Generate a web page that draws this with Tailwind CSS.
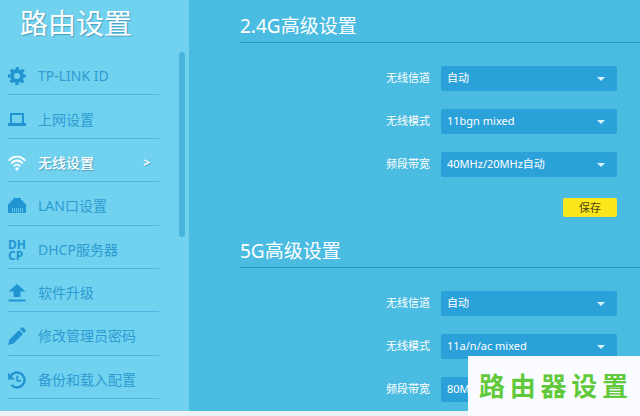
<!DOCTYPE html>
<html lang="zh-CN">
  <head>
    <meta charset="UTF-8" />
    <meta name="viewport" content="width=device-width, initial-scale=1.0" />
    <title>路由设置</title>
    <script src="https://cdn.jsdelivr.net/npm/@tailwindcss/browser@4"></script>
  </head>
  <body
    class="h-screen flex flex-col overflow-hidden bg-[#ebf1f5] font-['Noto_Sans','Noto_Sans_CJK_SC',sans-serif]"
  >
    <div class="flex-1 min-h-0 flex bg-[#4bbce1] mb-[5px]">
      <!-- Sidebar -->
      <aside class="w-[189px] shrink-0 flex flex-col bg-[#71d2f0]">
        <h1
          class="h-[52px] pl-5 pt-[3px] text-[28px] leading-10 text-white text-shadow-[1px_1px_1px_#4a9dbb]"
        >
          路由设置
        </h1>
        <div class="flex-1 min-h-0 flex justify-between pl-2 pr-1">
          <nav class="w-[151px] pb-3 text-sm text-[#2e9bd2]">
            <ul class="h-full grid auto-rows-fr">
              <li class="border-b border-[#4db6e0]">
                <a href="#cloud" class="h-full flex items-center gap-3 pt-1.5">
                  <svg class="size-[18px]" viewBox="0 0 18 18" fill="none" stroke="#2195d2">
                    <circle cx="9" cy="9" r="5" stroke-width="4" />
                    <circle cx="9" cy="9" r="7.8" stroke-width="2.6" stroke-dasharray="3.2 2.926" stroke-dashoffset="1.6" />
                  </svg>
                  TP-LINK ID
                </a>
              </li>
              <li class="border-b border-[#4db6e0]">
                <a href="#wan" class="h-full flex items-center gap-3 pt-1.5">
                  <svg class="size-[18px]" viewBox="0 0 18 18" fill="#2195d2">
                    <path fill-rule="evenodd" d="M2 2h14v10h2v3H0v-3h2zM4 4v8h10V4z" />
                  </svg>
                  上网设置
                </a>
              </li>
              <li class="border-b border-[#4db6e0]">
                <a
                  href="#wireless"
                  class="h-full flex items-center gap-3 pt-1.5 text-white font-medium text-shadow-[1px_1px_1px_#4a9dbb]"
                >
                  <svg class="size-[18px]" viewBox="0 0 18 18" fill="none" stroke="#fff" stroke-width="1.8">
                    <path d="M.7 6.7C5.2 1.2 12.8 1.2 17.3 6.7" />
                    <path d="M3.3 9.5c3.2-4 8.2-4 11.4 0" />
                    <path d="M5.9 12.2c1.8-2.2 4.4-2.2 6.2 0" />
                    <circle cx="9" cy="14.9" r="1.6" fill="#fff" stroke="none" />
                  </svg>
                  无线设置
                  <span class="ml-auto pr-[9px] text-xs font-bold">&gt;</span>
                </a>
              </li>
              <li class="border-b border-[#4db6e0]">
                <a href="#lan" class="h-full flex items-center gap-3 pt-1.5">
                  <svg class="size-[18px]" viewBox="0 0 18 18">
                    <path
                      fill="#2195d2"
                      d="M6 1h6a1 1 0 0 1 1 1v1.500h1.500a1 1 0 0 1 1 1V6H16c1.200 0 2 1 2 2.300V15a1 1 0 0 1-1 1H1a1 1 0 0 1-1-1V8.300C0 7 .8 6 2 6h.5V4.500a1 1 0 0 1 1-1H5V2a1 1 0 0 1 1-1z"
                    />
                    <path stroke="#71d2f0" stroke-width="0.8" d="M4.500 11v4.500M6.500 11v4.500M8.500 11v4.500M10.500 11v4.500M12.500 11v4.500M14.500 11v4.500" />
                  </svg>
                  LAN口设置
                </a>
              </li>
              <li class="border-b border-[#4db6e0]">
                <a href="#dhcp" class="h-full flex items-center gap-3 pt-1.5">
                  <span class="w-[18px] text-xs leading-[11px] font-bold text-[#2195d2]" aria-hidden="true">DH<br />CP</span>
                  DHCP服务器
                </a>
              </li>
              <li class="border-b border-[#4db6e0]">
                <a href="#upgrade" class="h-full flex items-center gap-3 pt-1.5">
                  <svg class="size-[18px]" viewBox="0 0 18 18" fill="#2195d2">
                    <path d="M9 0l8.500 7.500H12.500V13h-7V7.500H.5zM.5 15.500h17v2H.5z" />
                  </svg>
                  软件升级
                </a>
              </li>
              <li class="border-b border-[#4db6e0]">
                <a href="#password" class="h-full flex items-center gap-3 pt-1.5">
                  <svg class="size-[18px]" viewBox="0 0 18 18" fill="#2195d2">
                    <path d="M0 18l1.500-5.500L11 3l4 4-9.500 9.500zM12 2L13.500.5q.8-.8 1.600 0l2.400 2.400q.8.800 0 1.600L16 6z" />
                  </svg>
                  修改管理员密码
                </a>
              </li>
              <li class="border-b border-[#4db6e0]">
                <a href="#backup" class="h-full flex items-center gap-3 pt-1.5">
                  <svg class="size-[18px]" viewBox="0 0 18 18" fill="none" stroke="#2195d2">
                    <path stroke-width="2.4" d="M2.400 5.500A7.500 7.500 0 1 1 3.500 14" />
                    <path fill="#2195d2" stroke="none" d="M0 1.500V8.500h7z" />
                    <path stroke-width="1.8" d="M9.300 4.800V9.800h3.700" />
                  </svg>
                  备份和载入配置
                </a>
              </li>
            </ul>
          </nav>
          <!-- Scroll thumb -->
          <div class="w-[6px] h-[185px] rounded-full bg-[#49b5dd]"></div>
        </div>
      </aside>

      <!-- Settings -->
      <main class="flex-1 min-w-0 overflow-hidden pl-[51px] pt-3 text-white">
        <form>
          <h2 class="border-b border-[#239bcb] pb-0.5 text-[19px] leading-7">2.4G高级设置</h2>
          <div class="flex flex-col items-end gap-[18px] pt-[23px] pr-[23px] text-[11px]">
            <div class="flex items-center gap-[11px]">
              <label for="channel24">无线信道</label>
              <div class="relative">
                <select id="channel24" class="block w-44 h-[25px] appearance-none rounded-xs bg-[#2ba1d9] px-1.5">
                  <option>自动</option>
                </select>
                <svg class="absolute right-3 top-[11px] w-2 h-1 pointer-events-none" viewBox="0 0 8 4" fill="#d5f2fd"><path d="M0 0h8L4 4z" /></svg>
              </div>
            </div>
            <div class="flex items-center gap-[11px]">
              <label for="mode24">无线模式</label>
              <div class="relative">
                <select id="mode24" class="block w-44 h-[25px] appearance-none rounded-xs bg-[#2ba1d9] px-1.5">
                  <option>11bgn mixed</option>
                </select>
                <svg class="absolute right-3 top-[11px] w-2 h-1 pointer-events-none" viewBox="0 0 8 4" fill="#d5f2fd"><path d="M0 0h8L4 4z" /></svg>
              </div>
            </div>
            <div class="flex items-center gap-[11px]">
              <label for="band24">频段带宽</label>
              <div class="relative">
                <select id="band24" class="block w-44 h-[25px] appearance-none rounded-xs bg-[#2ba1d9] px-1.5">
                  <option>40MHz/20MHz自动</option>
                </select>
                <svg class="absolute right-3 top-[11px] w-2 h-1 pointer-events-none" viewBox="0 0 8 4" fill="#d5f2fd"><path d="M0 0h8L4 4z" /></svg>
              </div>
            </div>
            <button type="button" class="mt-[3px] w-[54px] h-[19px] rounded-xs bg-[#fbe71c] leading-none text-[#4d4310]">保存</button>
          </div>
        </form>

        <form class="pt-5">
          <h2 class="border-b border-[#239bcb] pb-0.5 text-[19px] leading-7">5G高级设置</h2>
          <div class="flex flex-col items-end gap-[18px] pt-[23px] pr-[23px] text-[11px]">
            <div class="flex items-center gap-[11px]">
              <label for="channel5">无线信道</label>
              <div class="relative">
                <select id="channel5" class="block w-44 h-[25px] appearance-none rounded-xs bg-[#2ba1d9] px-1.5">
                  <option>自动</option>
                </select>
                <svg class="absolute right-3 top-[11px] w-2 h-1 pointer-events-none" viewBox="0 0 8 4" fill="#d5f2fd"><path d="M0 0h8L4 4z" /></svg>
              </div>
            </div>
            <div class="flex items-center gap-[11px]">
              <label for="mode5">无线模式</label>
              <div class="relative">
                <select id="mode5" class="block w-44 h-[25px] appearance-none rounded-xs bg-[#2ba1d9] px-1.5">
                  <option>11a/n/ac mixed</option>
                </select>
                <svg class="absolute right-3 top-[11px] w-2 h-1 pointer-events-none" viewBox="0 0 8 4" fill="#d5f2fd"><path d="M0 0h8L4 4z" /></svg>
              </div>
            </div>
            <div class="flex items-center gap-[11px]">
              <label for="band5">频段带宽</label>
              <div class="relative">
                <select id="band5" class="block w-44 h-[25px] appearance-none rounded-xs bg-[#2ba1d9] px-1.5">
                  <option>80MHz</option>
                </select>
              </div>
            </div>
          </div>
        </form>
      </main>
    </div>

    <!-- Site mark -->
    <div
      class="absolute right-0 bottom-0 w-[172px] h-[60px] flex items-center bg-[#fafcff] pl-[11px] pr-3 text-[26px] font-bold text-[#62c93c]"
    >
      <p class="w-full [text-align-last:justify]">路由器设置</p>
    </div>
  </body>
</html>
